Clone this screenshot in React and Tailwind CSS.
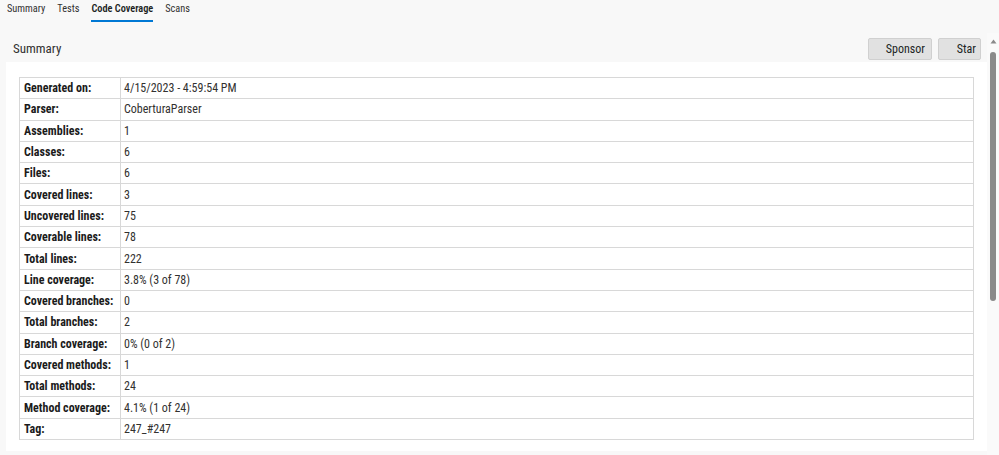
import React from 'react';

const rows = [
  ['Generated on:', '4/15/2023 - 4:59:54 PM'],
  ['Parser:', 'CoberturaParser'],
  ['Assemblies:', '1'],
  ['Classes:', '6'],
  ['Files:', '6'],
  ['Covered lines:', '3'],
  ['Uncovered lines:', '75'],
  ['Coverable lines:', '78'],
  ['Total lines:', '222'],
  ['Line coverage:', '3.8% (3 of 78)'],
  ['Covered branches:', '0'],
  ['Total branches:', '2'],
  ['Branch coverage:', '0% (0 of 2)'],
  ['Covered methods:', '1'],
  ['Total methods:', '24'],
  ['Method coverage:', '4.1% (1 of 24)'],
  ['Tag:', '247_#247'],
];

const tabs = ['Summary', 'Tests', 'Code Coverage', 'Scans'];

export default function App() {
  return (
    <div className="w-[999px] h-[455px] overflow-hidden bg-[#f8f8f8] text-[#323130] font-['Roboto','Open_Sans',sans-serif] [font-stretch:80%]">
      {/* Tabs */}
      <div className="flex h-[25px] pl-[7px] gap-[12px] text-[10.3px]">
        {tabs.map((t) => (
          <div
            key={t}
            className={
              t === 'Code Coverage'
                ? 'relative pt-[1px] font-semibold text-[#201f1e]'
                : 'pt-[1px] text-[#323130]'
            }
          >
            {t}
            {t === 'Code Coverage' && (
              <div className="absolute left-0 right-0 top-[20px] h-[2px] bg-[#0078d4]" />
            )}
          </div>
        ))}
      </div>

      <div className="flex">
        {/* Main */}
        <div className="w-[987px] pl-[6px]">
          <div className="flex items-center justify-between h-[37px] pt-[12px] pb-[2px] pr-[6px]">
            <div className="pl-[7px] text-[13px] text-[#323130]">Summary</div>
            <div className="flex gap-[6px] text-[12px]">
              <button className="w-[64px] h-[22px] pr-[6px] text-right bg-[#e1e1e1] border border-[#d0d0d0] rounded-[2px] text-[#201f1e]">
                Sponsor
              </button>
              <button className="w-[43px] h-[22px] pr-[4px] text-right bg-[#e1e1e1] border border-[#d0d0d0] rounded-[2px] text-[#201f1e]">
                Star
              </button>
            </div>
          </div>

          <div className="bg-white h-[389px] pt-[15px] px-[13px]">
            <table className="w-full border-collapse text-[12px]">
              <tbody>
                {rows.map(([k, v]) => (
                  <tr key={k} className="h-[21.3px]">
                    <th className="w-[101px] min-w-[101px] border border-[#d8d8d8] pl-[4px] pr-[3px] text-left font-bold text-[#1b1b1b] whitespace-nowrap leading-none">
                      {k}
                    </th>
                    <td className="border border-[#d8d8d8] px-[3px] text-[#323130] leading-none">{v}</td>
                  </tr>
                ))}
              </tbody>
            </table>
          </div>
        </div>

        {/* Scrollbar */}
        <div className="w-[12px] mt-[8px] h-[422px] bg-[#fafafa] flex flex-col items-center">
          <svg width="7" height="5" viewBox="0 0 7 5" className="mt-[6px]">
            <path d="M3.5 0.5 L6.5 4.5 L0.5 4.5 Z" fill="#8a8a8a" />
          </svg>
          <div className="mt-[8px] w-[6px] h-[249px] rounded-full bg-[#8a8a8a]" />
        </div>
      </div>
    </div>
  );
}
